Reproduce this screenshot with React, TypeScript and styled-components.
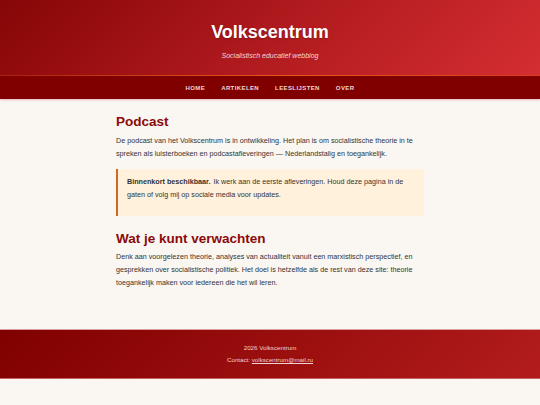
import styled, { createGlobalStyle } from "styled-components";

const GlobalStyle = createGlobalStyle`
  html, body {
    margin: 0;
    padding: 0;
    background: #faf6f1;
  }
  body {
    font-family: "Liberation Sans", Arial, sans-serif;
    color: #333;
  }
  * {
    box-sizing: border-box;
  }
`;

const Header = styled.header`
  background: linear-gradient(135deg, #860606 0%, #b01a1e 50%, #d42e32 100%);
  padding: 22px 20px 15px;
  text-align: center;
  border-bottom: 1px solid transparent;
  border-image: linear-gradient(90deg, rgba(230, 80, 20, 0.35), #e85a1a 55%, rgba(230, 80, 20, 0.5)) 1;
`;

const SiteTitle = styled.h1`
  margin: 0 0 9px;
  font-size: 18px;
  line-height: 21px;
  font-weight: 700;
  color: #fff;
  text-shadow: 0 1px 2px rgba(0, 0, 0, 0.25);
`;

const Tagline = styled.p`
  margin: 0;
  font-size: 7px;
  line-height: 8px;
  font-style: italic;
  color: #f6d6d6;
`;

const Nav = styled.nav`
  background: #800000;
  height: 23px;
  display: flex;
  justify-content: center;
  align-items: center;
  gap: 16px;
  box-shadow: 0 1px 2px rgba(200, 60, 80, 0.35);
`;

const NavLink = styled.a`
  font-size: 6px;
  font-weight: 700;
  letter-spacing: 0.4px;
  text-transform: uppercase;
  color: #f0d6d6;
  text-decoration: none;
`;

const Main = styled.main`
  max-width: 308px;
  margin: 0 auto;
  padding: 15px 0 32px;
`;

const Heading = styled.h2<{ $first?: boolean }>`
  margin: ${(p) => (p.$first ? "0" : "15px")} 0 3.5px;
  font-size: 13.5px;
  line-height: 16px;
  font-weight: 700;
  color: #8b0a0a;
`;

const Paragraph = styled.p`
  margin: 0 0 8px;
  font-size: 7.2px;
  line-height: 13px;
  color: #333;
`;

const Strong = styled.strong`
  font-weight: 700;
  margin-right: 1px;
`;

const Callout = styled.div`
  background: #fff1dc;
  border-left: 2px solid #d2691e;
  padding: 6px 12px 7px 9px;
  margin-top: 9px;
`;

const Footer = styled.footer`
  background: linear-gradient(135deg, #800000 0%, #9a0e0e 50%, #b31c1c 100%);
  border-top: 1px solid #d9a0a0;
  border-bottom: 1px solid #c76060;
  padding: 12px 20px 12px;
  text-align: center;
`;

const FooterLine = styled.p`
  margin: 0;
  font-size: 6.2px;
  line-height: 12px;
  color: #f2d2d2;

  a {
    color: inherit;
    text-decoration: underline;
  }
`;

const navItems = ["Home", "Artikelen", "Leeslijsten", "Over"];

export default function App() {
  return (
    <>
      <GlobalStyle />
      <Header>
        <SiteTitle>Volkscentrum</SiteTitle>
        <Tagline>Socialistisch educatief webblog</Tagline>
      </Header>
      <Nav>
        {navItems.map((item) => (
          <NavLink key={item} href="#">
            {item}
          </NavLink>
        ))}
      </Nav>
      <Main>
        <Heading $first>Podcast</Heading>
        <Paragraph>
          De podcast van het Volkscentrum is in ontwikkeling. Het plan is om socialistische theorie in te
          spreken als luisterboeken en podcastafleveringen — Nederlandstalig en toegankelijk.
        </Paragraph>
        <Callout>
          <Paragraph>
            <Strong>Binnenkort beschikbaar.</Strong> Ik werk aan de eerste afleveringen. Houd deze pagina in de
            gaten of volg mij op sociale media voor updates.
          </Paragraph>
        </Callout>
        <Heading>Wat je kunt verwachten</Heading>
        <Paragraph>
          Denk aan voorgelezen theorie, analyses van actualiteit vanuit een marxistisch perspectief, en
          gesprekken over socialistische politiek. Het doel is hetzelfde als de rest van deze site: theorie
          toegankelijk maken voor iedereen die het wil leren.
        </Paragraph>
      </Main>
      <Footer>
        <FooterLine>2026 Volkscentrum</FooterLine>
        <FooterLine>
          Contact: <a href="#">volkscentrum@mail.ru</a>
        </FooterLine>
      </Footer>
    </>
  );
}
